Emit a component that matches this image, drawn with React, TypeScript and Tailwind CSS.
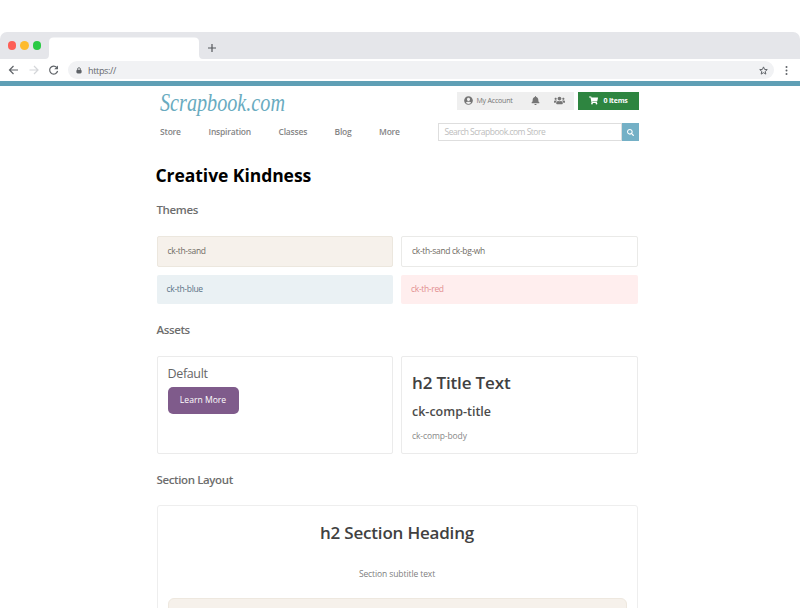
import type { ReactNode } from "react";
import { FaUserCircle, FaBell, FaUsers, FaShoppingCart, FaSearch } from "react-icons/fa";

function BrowserChrome() {
  return (
    <div className="pt-8">
      <div className="flex h-[27px] items-end rounded-t-[7px] bg-[#e5e6ea] pl-[7.500px]">
        <div className="flex h-[27px] w-[41.500px] items-center gap-[4px]">
          <span className="size-[8.500px] rounded-full bg-[#fd5f57]" />
          <span className="size-[8.500px] rounded-full bg-[#febb2e]" />
          <span className="size-[8.500px] rounded-full bg-[#2aca43]" />
        </div>
        <svg className="-ml-1 h-[22px] w-[158px]" viewBox="0 0 158 22" fill="#fff">
          <path d="M0 22Q4 22 4 17.500V5Q4 .5 8.500 .5H149.500Q154 .5 154 5V17.500Q154 22 158 22Z" />
        </svg>
        <svg className="mb-[7px] ml-[5px] size-2" viewBox="0 0 8 8" stroke="#55585c" strokeWidth="1.2">
          <path d="M4 0V8M0 4H8" />
        </svg>
      </div>
      <div className="flex h-[22px] items-center bg-white pl-2">
        <svg className="h-3 w-[52px]" viewBox="0 0 52 12" fill="none" strokeWidth="1.2">
          <path d="M10 6H1.500M5.500 2L1.500 6L5.500 10" stroke="#5f6368" />
          <path d="M21.500 6H30M26 2L30 6L26 10" stroke="#d4d6d9" />
          <path d="M48.700 3.400A4 4 0 1 0 49.600 7" stroke="#5f6368" />
          <path d="M50 1.500V5.300H46.200Z" fill="#5f6368" />
        </svg>
        <div className="ml-[7.500px] flex h-[18px] w-[706.500px] items-center rounded-full bg-[#f1f2f4] pr-[6px] pl-[8px]">
          <svg className="h-[7px] w-[6px]" viewBox="0 0 6 8">
            <rect y="3" width="6" height="4.300" rx="1.500" fill="#5f6368" />
            <path d="M1.400 3.500V2.400A1.600 1.600 0 0 1 4.600 2.400V3.500" fill="none" stroke="#5f6368" />
          </svg>
          <span className="ml-[6.500px] text-[9px] leading-none tracking-[-0.35px] text-[#65686c]">https://</span>
          <svg className="ml-auto size-[9px]" viewBox="0 0 10 10" fill="none" stroke="#5f6368" strokeWidth="1.1">
            <path d="M5 1L6.200 3.800L9.200 4L6.900 6L7.600 9L5 7.400L2.400 9L3.100 6L.8 4L3.800 3.800Z" />
          </svg>
        </div>
        <svg className="ml-[10.500px] h-[9px] w-[3px]" viewBox="0 0 3 9" fill="#5f6368">
          <circle cx="1.500" cy="1" r="1" />
          <circle cx="1.500" cy="4.500" r="1" />
          <circle cx="1.500" cy="8" r="1" />
        </svg>
      </div>
    </div>
  );
}

function SiteHeader() {
  return (
    <header className="h-[56px]">
      <div className="flex h-[33px] items-start">
        <svg className="h-[32px] w-[131px] overflow-visible" viewBox="0 0 131 32" role="img">
          <text x="3" y="25" textLength="125" lengthAdjust="spacingAndGlyphs" fill="#69abc0" className="font-['Liberation_Serif',serif] text-[26px] italic">
            Scrapbook.com
          </text>
        </svg>
        <div className="mt-[5.500px] ml-[169px] flex h-[18.500px] w-[117px] items-center bg-[#efefef] pl-[7px] text-[#757575]">
          <FaUserCircle size={9} />
          <span className="ml-[4px] w-[36px] text-[7px] tracking-[-0.2px] whitespace-nowrap">My Account</span>
          <FaBell size={9} className="ml-[18px]" />
          <FaUsers size={11} className="ml-[14.500px]" />
        </div>
        <div className="mt-[5.500px] ml-[4.500px] flex h-[18.500px] w-[60.500px] items-center bg-[#2e8540] pl-[11px] text-white">
          <FaShoppingCart size={9} />
          <span className="ml-[5.500px] text-[7px] font-bold tracking-[-0.2px] whitespace-nowrap">0 items</span>
        </div>
      </div>
      <div className="flex h-[23px] items-center">
        <nav className="flex w-[281px] pt-[3px] pl-[3.500px] text-[8.500px] leading-[12px] font-semibold tracking-[-0.2px] text-[#858585]">
          <a className="w-[48.500px]">Store</a>
          <a className="w-[70px]">Inspiration</a>
          <a className="w-[56px]">Classes</a>
          <a className="w-[44.500px]">Blog</a>
          <a>More</a>
        </nav>
        <div className="mt-[3px] flex h-[18.500px] w-[201.500px]">
          <div className="flex flex-1 items-center border border-[#dedede] pt-px pl-[6px] text-[8.500px] tracking-[-0.5px] text-[#bdbdbd]">Search Scrapbook.com Store</div>
          <div className="flex w-[17.500px] items-center justify-center bg-[#74b0c6] text-white">
            <FaSearch size={7} />
          </div>
        </div>
      </div>
    </header>
  );
}

function SectionTitle({ children }: { children: ReactNode }) {
  return <h2 className="h-4 text-[11.500px] leading-4 font-semibold tracking-[-0.38px] text-[#6d6d6d]">{children}</h2>;
}

export default function App() {
  return (
    <div className="h-[608px] w-[800px] overflow-hidden bg-white font-['Open_Sans',sans-serif]">
      <BrowserChrome />
      <div className="h-[5px] bg-[#5f9fb5]" />
      <main className="ml-[156.500px] w-[481px]">
        <div className="w-[483px]">
          <SiteHeader />
        </div>
        <h1 className="mt-[21px] -ml-px h-6 text-[17.500px] leading-6 font-bold tracking-[-0.05px] text-black">Creative Kindness</h1>
        <div className="mt-[15px]">
          <SectionTitle>Themes</SectionTitle>
        </div>
        <div className="mt-[18px] grid grid-cols-2 gap-2 text-[8.500px] tracking-[-0.33px]">
          <div className="flex h-[30.500px] items-center rounded-[2px] border border-[#ece7de] bg-[#f6f1eb] pt-px pl-[10px] text-[#706c64]">ck-th-sand</div>
          <div className="flex h-[30.500px] items-center rounded-[2px] border border-[#eaeae8] bg-white pt-px pl-[10px] text-[#706c64]">ck-th-sand ck-bg-wh</div>
          <div className="flex h-[29px] items-center rounded-[2px] bg-[#eaf1f4] pt-px pl-[10px] text-[#5b7387]">ck-th-blue</div>
          <div className="flex h-[29px] items-center rounded-[2px] bg-[#ffeeee] pt-px pl-[10px] text-[#e28e90]">ck-th-red</div>
        </div>
        <div className="mt-[18px]">
          <SectionTitle>Assets</SectionTitle>
        </div>
        <div className="mt-[18px] grid h-[98px] grid-cols-2 gap-2">
          <div className="rounded-[2px] border border-[#ebebeb] pt-[9px] pl-[10px]">
            <p className="h-4 text-[12.500px] leading-4 tracking-[-0.35px] text-[#666]">Default</p>
            <button className="mt-[5px] block h-[27px] w-[71px] rounded-[5px] bg-[#7f5b8b] pt-px text-[8.600px] text-white">Learn More</button>
          </div>
          <div className="rounded-[2px] border border-[#ebebeb] pt-[14px] pl-[10px]">
            <h2 className="h-6 text-[17px] leading-6 font-semibold tracking-[-0.15px] text-[#414141]">h2 Title Text</h2>
            <h3 className="mt-[9px] h-4 text-[12.500px] leading-4 font-semibold text-[#4b4b4b]">ck-comp-title</h3>
            <p className="mt-[10px] h-3 text-[8.500px] leading-3 tracking-[-0.1px] text-[#888]">ck-comp-body</p>
          </div>
        </div>
        <div className="mt-[18px]">
          <SectionTitle>Section Layout</SectionTitle>
        </div>
        <section className="mt-[17px] h-[140px] rounded-[3px] border border-[#eeeeee] px-[10px] pt-[15px] text-center">
          <h2 className="h-6 text-[17px] leading-6 font-semibold tracking-[-0.2px] text-[#414141]">h2 Section Heading</h2>
          <p className="mt-[23px] h-3 text-[8.500px] leading-3 tracking-[-0.1px] text-[#808080]">Section subtitle text</p>
          <div className="mt-[18px] h-16 rounded-[6px] border border-[#eee8df] bg-[#f6f1eb]" />
        </section>
      </main>
    </div>
  );
}
